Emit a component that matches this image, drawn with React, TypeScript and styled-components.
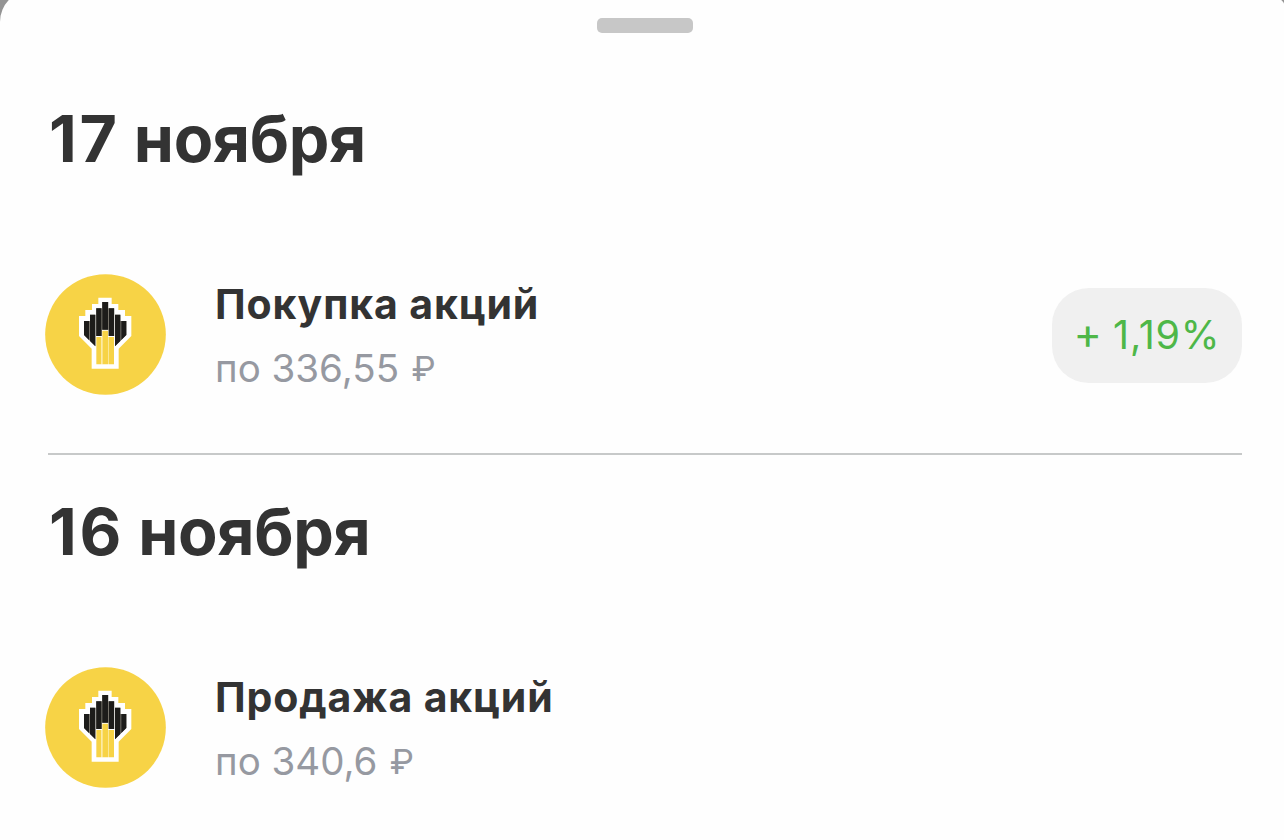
import { createGlobalStyle, styled } from 'styled-components';

const GlobalStyle = createGlobalStyle`
  * {
    box-sizing: border-box;
  }

  body {
    margin: 0;
    overflow: hidden;
    background: #949494;
    font-family: Inter, 'Liberation Sans', sans-serif;
  }
`;

const Screen = styled.div`
  width: 1284px;
  height: 840px;
  overflow: hidden;
`;

// the sheet is slightly larger than the screen, so its corners are cut
const Sheet = styled.main`
  width: 1290px;
  height: 860px;
  margin-top: -10px;
  padding: 28px 48px 0;
  border-radius: 32px 32px 0 0;
  background: #fefefe;
`;

const Viewport = styled.div`
  display: flow-root;
`;

const Handle = styled.div`
  width: 96px;
  height: 15px;
  margin: 0 auto;
  border-radius: 5px;
  background: #c7c7c7;
`;

const Day = styled.section<{ $first?: boolean }>`
  width: 1194px;
  height: ${(props) => (props.$first ? '422px' : '392px')};
  padding-top: ${(props) => (props.$first ? '66px' : '37px')};
  border-bottom: ${(props) => (props.$first ? '2px solid #c7c9c9' : 'none')};
`;

const DayTitle = styled.h2`
  margin: 0;
  height: 80px;
  line-height: 80px;
  font-size: 64.5px;
  font-weight: 700;
  letter-spacing: -0.35px;
  color: #333333;
  white-space: nowrap;
`;

const DayNumber = styled.span`
  margin-left: 1px;
  margin-right: -1px;
  letter-spacing: 2.8px;
`;

const Row = styled.div`
  display: flex;
  align-items: center;
  height: 121px;
  margin-top: 95px;
  margin-left: -3px;
`;

const Info = styled.div`
  flex: 1;
  margin-left: 49px;
  padding-top: 2px;
  white-space: nowrap;
`;

const Operation = styled.div`
  height: 64px;
  line-height: 64px;
  font-size: 41px;
  font-weight: 700;
  letter-spacing: 0.87px;
  color: #333333;
`;

const Price = styled.div`
  height: 64px;
  line-height: 64px;
  font-size: 38.5px;
  color: #9699a1;
`;

const Currency = styled.span`
  margin-left: 1.5px;
  font-size: 34.5px;
  line-height: 1;
  vertical-align: 1px;
`;

const Badge = styled.div`
  display: flex;
  align-items: baseline;
  justify-content: center;
  gap: 11px;
  width: 190px;
  height: 95px;
  margin-top: 2px;
  border-radius: 37px;
  background: #f0f0f0;
  color: #4eb748;
  font-size: 39.5px;
  line-height: 91px;
  letter-spacing: 0.8px;
  white-space: nowrap;
`;

const Sign = styled.span`
  font-size: 43px;
  letter-spacing: 0;
`;

const LogoSvg = styled.svg`
  display: block;
  flex: none;
  width: 121px;
  height: 121px;
`;

const Logo = () => (
  <LogoSvg viewBox="-60 -33 363 363">
    <circle cx="121.5" cy="148.5" r="181" fill="#f7d346" />
    <path
      d="M100 38H140V57H160V75H180V93H199V153L161 191V251H80V191L42 153V93H61V75H81V57H100Z"
      fill="#fff"
    />
    <path d="M57 108H91V184L57 150Z M75 89H91V108H75Z" fill="#77736a" />
    <path d="M150 108H184V150L150 184Z M150 89H166V108H150Z" fill="#77736a" />
    <path d="M93 70H111V51H130V70H148V153H130V134H111V153H93Z" fill="#77736a" />
    <path
      d="M57 108H72V165L57 150Z M75 89H91V184L75 168Z M94 70H109V153H94Z M112 51H129V134H112Z M132 70H147V153H132Z M150 89H166V168L150 184Z M169 108H184V150L169 165Z"
      fill="#1d1c1a"
    />
    <path d="M94 156H109V238H94Z M112 137H129V238H112Z M132 156H147V238H132Z" fill="#f7d346" />
    <path d="M109 156H112V238H109Z M129 156H132V238H129Z" fill="#fbe795" />
  </LogoSvg>
);

export default function App() {
  return (
    <Screen>
      <GlobalStyle />
      <Viewport>
        <Sheet>
          <Handle />
          <Day $first>
            <DayTitle>
              <DayNumber>17</DayNumber> ноября
            </DayTitle>
            <Row>
              <Logo />
              <Info>
                <Operation>Покупка акций</Operation>
                <Price>
                  по 336,55 <Currency>₽</Currency>
                </Price>
              </Info>
              <Badge>
                <Sign>+</Sign>
                <span>1,19%</span>
              </Badge>
            </Row>
          </Day>
          <Day>
            <DayTitle>
              <DayNumber>16</DayNumber> ноября
            </DayTitle>
            <Row>
              <Logo />
              <Info>
                <Operation>Продажа акций</Operation>
                <Price>
                  по 340,6 <Currency>₽</Currency>
                </Price>
              </Info>
            </Row>
          </Day>
        </Sheet>
      </Viewport>
    </Screen>
  );
}
